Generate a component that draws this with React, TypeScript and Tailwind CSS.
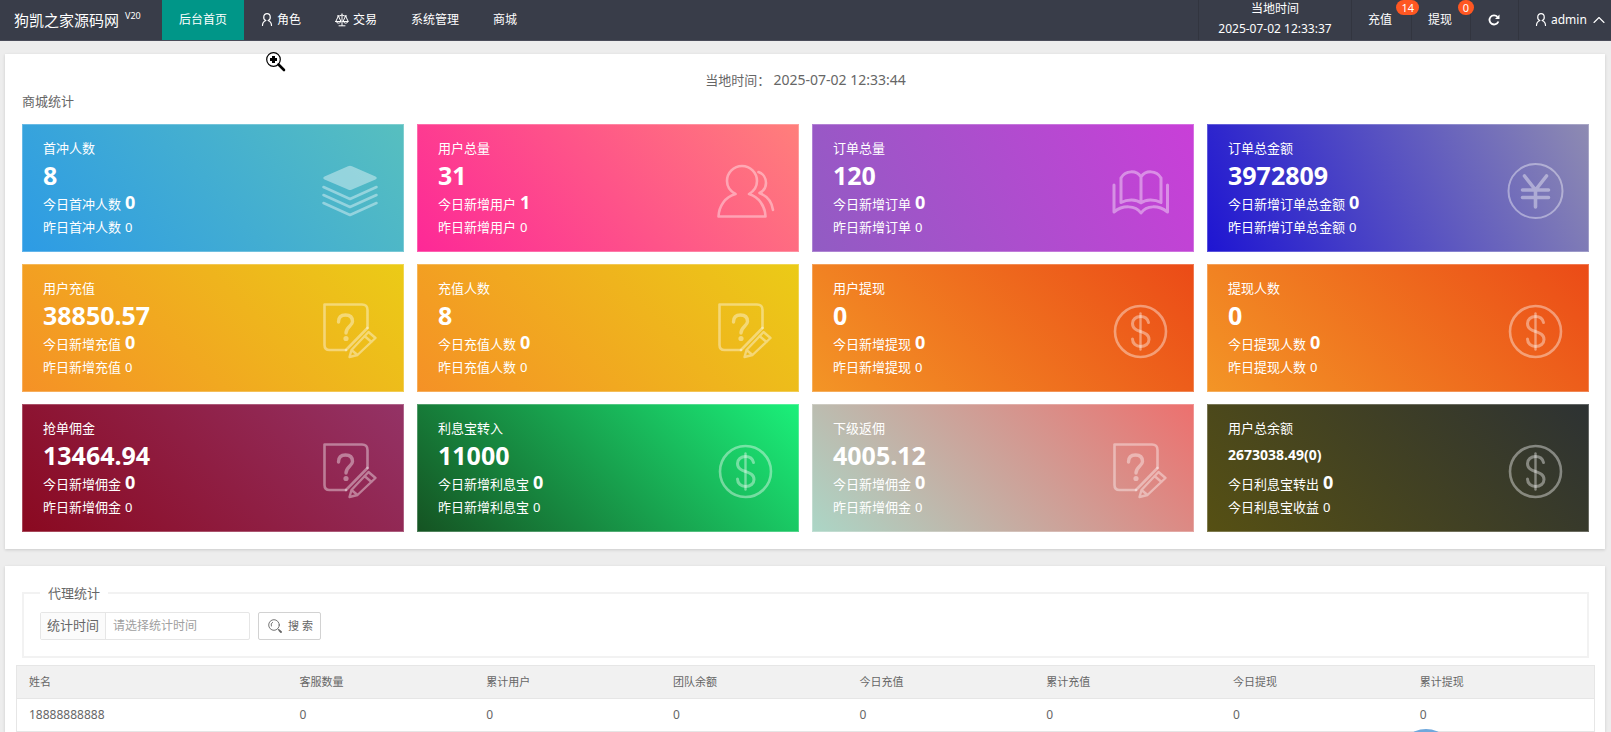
import React from 'react';

const strokeProps = {
  fill: 'none',
  stroke: 'currentColor',
  strokeLinecap: 'round' as const,
  strokeLinejoin: 'round' as const,
};

function LayersIcon() {
  return (
    <svg viewBox="0 0 60 60" className="size-[60px]" {...strokeProps} strokeWidth="2.6">
      <path d="M27 5.200 Q29 4.200 31 5.200 L54.500 15.500 Q57 17 54.500 18.500 L31 28.500 Q29 29.500 27 28.500 L3.500 18.500 Q1 17 3.500 15.500 Z" fill="currentColor" stroke="none" />
      <path d="M2.500 26 L29 38 L55.500 26" />
      <path d="M2.500 34 L29 46 L55.500 34" />
      <path d="M2.500 42 L29 54 L55.500 42" />
    </svg>
  );
}

function UsersIcon() {
  return (
    <svg viewBox="0 0 60 60" className="size-[60px]" {...strokeProps} strokeWidth="2.6">
      <path d="M19.500 33 C13 29.500 11 25 11 20 A14.800 14.800 0 0 1 41 20 C41 25 39 29.500 33 33 C43 36 49 45 49.500 55.500 H2.500 C3 45 9 36 19.500 33" />
      <path d="M42.500 11 C47 12.500 50 17 50 22 C50 27 47.500 30 43.500 32 C51 35 56 41 57 49" />
    </svg>
  );
}

function BookIcon() {
  return (
    <svg viewBox="0 0 60 60" className="size-[60px]" {...strokeProps} strokeWidth="3">
      <path d="M30 16 C25.500 9 14.500 9 10 17 V41.500 C16.500 38 25.500 38 30 42 C34.500 38 43.500 38 50 41.500 V17 C45.500 9 34.500 9 30 16 V41" />
      <path d="M3 24 V51 C11.500 44 24.500 44 30 52 C35.500 44 47.500 44 56.500 51 V24" />
    </svg>
  );
}

function YenIcon() {
  return (
    <svg viewBox="0 0 60 60" className="size-[60px]" {...strokeProps} strokeWidth="3.6">
      <circle cx="29.500" cy="30" r="27" strokeWidth="2" />
      <path d="M18.500 15 L29.500 29 L40.500 15 M29.500 29 V46 M16.500 29 H42.500 M16.500 36.500 H42.500" />
    </svg>
  );
}

function DollarIcon() {
  return (
    <svg viewBox="0 0 60 60" className="size-[60px]" {...strokeProps} strokeWidth="3">
      <circle cx="29.500" cy="30.500" r="25.500" strokeWidth="2.600" />
      <path d="M29.500 12.500 V48.500" strokeWidth="2.400" />
      <path d="M37.500 21.500 C36.500 17 33.500 15.500 29.500 15.500 C25 15.500 21.500 18.500 21.500 22.500 C21.500 27.500 25.500 29 29.500 30.500 C33.500 32 38 33.500 38 38.500 C38 42.500 34.500 45.500 29.500 45.500 C25 45.500 21.500 42.500 21.500 38" />
    </svg>
  );
}

function SurveyIcon() {
  return (
    <svg viewBox="0 0 60 60" className="size-[60px]" {...strokeProps} strokeWidth="2.600">
      <path d="M46.500 27 V9 Q46.500 3.500 41 3.500 H3.500 V44 Q3.500 49 8.500 49 H25" />
      <path d="M46.500 27 L25 49" />
      <path d="M17.500 21 Q17.500 14 24.500 14 Q31.500 14 31.500 20.500 C31.500 25 25 26 25 32" strokeWidth="3.400" />
      <circle cx="25" cy="37.500" r="2.600" fill="currentColor" stroke="none" />
      <path d="M47.500 31 L54.500 37 L36.500 54 L28.500 56 L30.500 49 Z M30.500 49 L36.500 54 M43.500 35 L50.500 41" strokeWidth="2.400" />
    </svg>
  );
}

function PersonIcon() {
  return (
    <svg viewBox="0 0 12 14" className="h-[14px] w-3 shrink-0" {...strokeProps} strokeWidth="1.200">
      <path d="M4.700 7.500 C2.800 6.500 2.600 4.800 2.800 3.800 A3.200 3.200 0 0 1 9.200 3.800 C9.400 4.800 9.200 6.500 7.300 7.500" />
      <path d="M4.700 7.500 C2.500 8.500 1.500 10.500 1.500 12.500 M7.300 7.500 C9.500 8.500 10.500 10.500 10.500 12.500" />
    </svg>
  );
}

function ScalesIcon() {
  return (
    <svg viewBox="0 0 14 14" className="size-[14px] shrink-0" {...strokeProps} strokeWidth="1">
      <path d="M7 0.800 V12.500 M2.500 3 Q5 3.300 7 2 Q9 3.300 11.500 3 M4 12.800 H10 M3.400 3 L0.800 8.500 M3.400 3 L6 8.500 M10.600 3 L8 8.500 M10.600 3 L13.200 8.500" />
      <path d="M0.800 8.500 H6 Q3.400 12 0.800 8.500 Z M8 8.500 H13.200 Q10.600 12 8 8.500 Z" />
    </svg>
  );
}

function RefreshIcon() {
  return (
    <svg viewBox="0 0 12 12" className="size-3" {...strokeProps} strokeWidth="1.800">
      <path d="M9.500 2.800 A4.600 4.600 0 1 0 10.400 7.500" strokeLinecap="butt" />
      <path d="M11.500 0.500 V5 H7 Z" fill="currentColor" stroke="none" />
    </svg>
  );
}

function SearchIcon() {
  return (
    <svg viewBox="0 0 14 14" className="size-[14px]" {...strokeProps} strokeWidth="0.900">
      <circle cx="6" cy="6" r="5.300" />
      <path d="M3.300 7 A3 3 0 0 1 4.500 3.300" />
      <path d="M10 10 L11 11" />
      <path d="M11.300 11.300 L13 13" strokeWidth="1.800" />
    </svg>
  );
}

type Stat = {
  title: string;
  value: string;
  small?: boolean;
  today: [string, string];
  yesterday: [string, string];
  gradient: string;
  Icon: () => React.JSX.Element;
};

const stats: Stat[] = [
  { title: '首冲人数', value: '8', today: ['今日首冲人数', '0'], yesterday: ['昨日首冲人数', '0'], gradient: 'bg-[linear-gradient(50deg,#2d9be5,#57bfbf)]', Icon: LayersIcon },
  { title: '用户总量', value: '31', today: ['今日新增用户', '1'], yesterday: ['昨日新增用户', '0'], gradient: 'bg-[linear-gradient(50deg,#fd2897,#ff7f7b)]', Icon: UsersIcon },
  { title: '订单总量', value: '120', today: ['今日新增订单', '0'], yesterday: ['昨日新增订单', '0'], gradient: 'bg-[linear-gradient(65deg,#915cc3,#c93fd8)]', Icon: BookIcon },
  { title: '订单总金额', value: '3972809', today: ['今日新增订单总金额', '0'], yesterday: ['昨日新增订单总金额', '0'], gradient: 'bg-[linear-gradient(65deg,#1e15d2,#8e8bb2)]', Icon: YenIcon },
  { title: '用户充值', value: '38850.57', today: ['今日新增充值', '0'], yesterday: ['昨日新增充值', '0'], gradient: 'bg-[linear-gradient(45deg,#f59126,#ebcb17)]', Icon: SurveyIcon },
  { title: '充值人数', value: '8', today: ['今日充值人数', '0'], yesterday: ['昨日充值人数', '0'], gradient: 'bg-[linear-gradient(45deg,#f59126,#ebcb17)]', Icon: SurveyIcon },
  { title: '用户提现', value: '0', today: ['今日新增提现', '0'], yesterday: ['昨日新增提现', '0'], gradient: 'bg-[linear-gradient(45deg,#f39526,#eb4b17)]', Icon: DollarIcon },
  { title: '提现人数', value: '0', today: ['今日提现人数', '0'], yesterday: ['昨日提现人数', '0'], gradient: 'bg-[linear-gradient(45deg,#f39526,#eb4b17)]', Icon: DollarIcon },
  { title: '抢单佣金', value: '13464.94', today: ['今日新增佣金', '0'], yesterday: ['昨日新增佣金', '0'], gradient: 'bg-[linear-gradient(45deg,#8a0920,#943366)]', Icon: SurveyIcon },
  { title: '利息宝转入', value: '11000', today: ['今日新增利息宝', '0'], yesterday: ['昨日新增利息宝', '0'], gradient: 'bg-[linear-gradient(45deg,#155322,#1bf07a)]', Icon: DollarIcon },
  { title: '下级返佣', value: '4005.12', today: ['今日新增佣金', '0'], yesterday: ['昨日新增佣金', '0'], gradient: 'bg-[linear-gradient(45deg,#abd6c6,#ed706e)]', Icon: SurveyIcon },
  { title: '用户总余额', value: '2673038.49(0)', small: true, today: ['今日利息宝转出', '0'], yesterday: ['今日利息宝收益', '0'], gradient: 'bg-[linear-gradient(45deg,#565013,#2d3233)]', Icon: DollarIcon },
];

const columns = ['姓名', '客服数量', '累计用户', '团队余额', '今日充值', '累计充值', '今日提现', '累计提现'];
const rows = [['18888888888', '0', '0', '0', '0', '0', '0', '0']];

function StatCard({ title, value, small, today, yesterday, gradient, Icon }: Stat) {
  return (
    <article className={`flex h-32 items-center justify-between border border-white/25 bg-origin-border pr-[22px] pl-5 text-[13px] text-white ${gradient}`}>
      <div className="flex flex-col pt-0.5">
        <h3 className="leading-6">{title}</h3>
        <strong className={small ? 'text-sm leading-[30px]' : 'text-[25px] leading-[30px]'}>{value}</strong>
        <p className="flex h-6 items-baseline gap-1">
          <span>{today[0]}</span>
          <b className="text-lg leading-6">{today[1]}</b>
        </p>
        <p className="flex h-7 items-center gap-1">
          <span>{yesterday[0]}</span>
          <span>{yesterday[1]}</span>
        </p>
      </div>
      <div className="pt-1.5 text-white/40">
        <Icon />
      </div>
    </article>
  );
}

function Header() {
  const item = 'flex items-center gap-1 px-[17px]';
  const tool = 'flex items-center border-l border-[#32353f]';
  return (
    <header className="flex h-[41px] items-stretch border-b border-[#4a4c59] bg-[#393d49] text-xs text-white">
      <a href="#home" className="flex w-[162px] items-center gap-1.5 pl-[14px] text-[15px]">
        狗凯之家源码网
        <sup className="text-[9px]">V20</sup>
      </a>
      <nav className="flex flex-1 items-stretch">
        <a href="#dashboard" className={`${item} bg-[#009688]`}>后台首页</a>
        <a href="#roles" className={item}><PersonIcon />角色</a>
        <a href="#trade" className={item}><ScalesIcon />交易</a>
        <a href="#system" className={item}>系统管理</a>
        <a href="#mall" className={item}>商城</a>
      </nav>
      <div className={`${tool} w-[153px] flex-col justify-center pb-0.5 text-center leading-5`}>
        <span>当地时间</span>
        <time>2025-07-02 12:33:37</time>
      </div>
      <a href="#recharge" className={`${tool} relative w-[60px] pl-4`}>
        充值
        <span className="absolute top-0 -right-2 z-10 rounded-full bg-[#ff5722] px-[5px] text-[11px] leading-[15px]">14</span>
      </a>
      <a href="#withdraw" className={`${tool} relative w-[59px] pl-4`}>
        提现
        <span className="absolute top-0 -right-1 z-10 rounded-full bg-[#ff5722] px-[5px] text-[11px] leading-[15px]">0</span>
      </a>
      <button type="button" aria-label="刷新" className={`${tool} w-12 pl-[17px]`}>
        <RefreshIcon />
      </button>
      <button type="button" className={`${tool} w-[93px] gap-1 pl-4`}>
        <PersonIcon />
        <span>admin</span>
        <svg viewBox="0 0 12 12" className="ml-auto mr-1.5 size-3" {...strokeProps} strokeWidth="1.100">
          <path d="M1 8.500 L6 3.500 L11 8.500" />
        </svg>
      </button>
    </header>
  );
}

export default function App() {
  return (
    <div className="h-screen overflow-hidden bg-[#ededed] font-['Noto_Sans','Noto_Sans_CJK_SC',sans-serif] text-[13px] text-[#666]">
      <Header />
      <main className="flex flex-col gap-[17px] pt-[13px] pr-1.5 pl-[5px]">
        <section className="bg-white pt-4 pr-4 pb-[17px] pl-[17px] shadow-[0_1px_3px_rgba(0,0,0,0.15)]">
          <p className="text-center leading-5">
            当地时间： <time className="text-[14px]">2025-07-02 12:33:44</time>
          </p>
          <h2 className="leading-[22px]">商城统计</h2>
          <div className="mt-3 grid grid-cols-4 gap-x-[13px] gap-y-3">
            {stats.map((s) => (
              <StatCard key={s.title} {...s} />
            ))}
          </div>
        </section>

        <section className="bg-white pt-[17px] shadow-[0_1px_3px_rgba(0,0,0,0.15)]">
          <fieldset className="mr-4 ml-[17px] border-2 border-[#f2f2f2] px-4 pt-[9px] pb-4">
            <legend className="px-2 leading-5">代理统计</legend>
            <form className="flex gap-2" onSubmit={(e) => e.preventDefault()}>
              <div className="flex h-7 rounded-xs border border-[#e6e6e6]">
                <label htmlFor="stat-time" className="flex items-center border-r border-[#e6e6e6] bg-[#fbfbfb] px-1.5">
                  统计时间
                </label>
                <input
                  id="stat-time"
                  type="text"
                  placeholder="请选择统计时间"
                  className="w-[143px] px-[7px] text-xs outline-none placeholder:text-[#a0a0a0]"
                />
              </div>
              <button type="submit" className="flex h-7 items-center gap-1.5 rounded-xs border border-[#d2d2d2] bg-white pr-[7px] pl-[9px] text-[11px]">
                <SearchIcon />
                搜 索
              </button>
            </form>
          </fieldset>
          <table className="mt-[7px] mr-2.5 ml-[11px] w-[calc(100%-21px)] table-fixed border-collapse border border-[#e6e6e6] text-left">
            <colgroup>
              <col className="w-[271px]" />
              <col span={7} />
            </colgroup>
            <thead className="bg-[#f1f1f1] text-[11px]">
              <tr className="h-[33px] border-b border-[#e6e6e6]">
                {columns.map((c) => (
                  <th key={c} scope="col" className="px-3 font-normal">{c}</th>
                ))}
              </tr>
            </thead>
            <tbody className="text-xs">
              {rows.map((r) => (
                <tr key={r[0]} className="h-[33px] border-b border-[#e6e6e6]">
                  {r.map((v, i) => (
                    <td key={columns[i]} className="px-3">{v}</td>
                  ))}
                </tr>
              ))}
            </tbody>
          </table>
        </section>
      </main>

      <button type="button" aria-label="客服" className="fixed right-[156px] -bottom-[55px] size-[58px] rounded-full bg-[#6fa8dc]" />

      <svg viewBox="0 0 20 20" className="pointer-events-none absolute top-[52px] left-[266px] size-5" aria-hidden="true">
        <circle cx="7.500" cy="7.500" r="6.800" fill="#fff" stroke="#000" strokeWidth="1.200" />
        <path d="M7.500 4 V11 M4 7.500 H11" stroke="#000" strokeWidth="3" />
        <path d="M12.500 12.500 L18 18" stroke="#000" strokeWidth="2.600" strokeLinecap="round" />
      </svg>
    </div>
  );
}
